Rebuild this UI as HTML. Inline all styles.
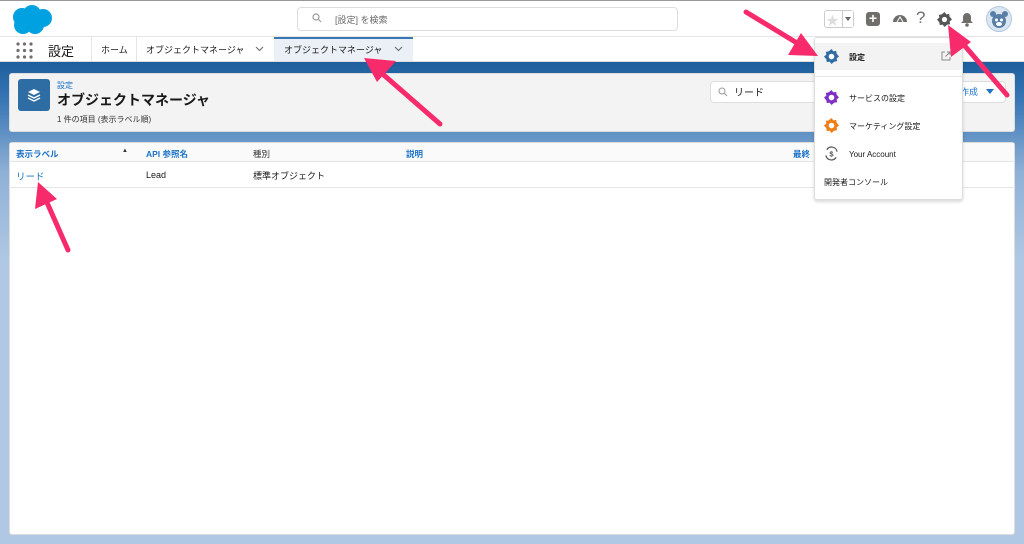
<!DOCTYPE html>
<html><head><meta charset="utf-8"><style>
*{box-sizing:border-box;margin:0;padding:0}
body{width:1024px;height:544px;overflow:hidden;font-family:"Liberation Sans","Noto Sans CJK JP",sans-serif;font-size:9px;color:#181818;background:#fff;position:relative}
.top{position:absolute;left:0;top:0;width:1024px;height:37px;background:#fff;border-top:1px solid #999;border-bottom:1px solid #e5e5e5}
.nav{position:absolute;left:0;top:37px;width:1024px;height:25px;background:#fff;border-bottom:1px solid #ddd}
.bg{position:absolute;left:0;top:62px;width:1024px;height:482px;background:linear-gradient(#1d5e9d 0px,#3a78b5 40px,#8fb0d6 110px,#b0c8e3 200px,#b0c8e3 482px)}
.card{position:absolute;background:#fff;border-radius:3px}
.abs{position:absolute;white-space:nowrap}
.blue{color:#1a73c8}
</style></head><body>
<div class="top">
 <svg class="abs" style="left:10px;top:3px" width="44" height="31" viewBox="0 0 44 31"><g fill="#00a1e0"><circle cx="12" cy="13" r="9"/><circle cx="22" cy="10" r="9"/><circle cx="33" cy="14" r="9"/><circle cx="25" cy="21" r="9"/><circle cx="13" cy="21" r="9"/></g></svg>
 <div class="abs" style="left:297px;top:6px;width:381px;height:24px;border:1px solid #ddd;border-radius:4px"></div>
 <svg class="abs" style="left:312px;top:12px" width="10" height="10" viewBox="0 0 10 10"><circle cx="4" cy="4" r="3" fill="none" stroke="#999" stroke-width="1.2"/><path d="M6.5 6.5L9 9" stroke="#999" stroke-width="1.2"/></svg>
 <div class="abs" style="left:335px;top:12px;color:#666;font-size:9px">[設定] を検索</div>
 <div class="abs" style="left:824px;top:9px;width:30px;height:18px;border:1px solid #ccc;border-radius:3px"></div>
 <div class="abs" style="left:826px;top:9px;color:#ddd;font-size:13px">★</div>
 <div class="abs" style="left:842px;top:10px;width:11px;height:16px;border-left:1px solid #ccc;background:#fff"></div>
 <div class="abs" style="left:845px;top:16px;border:3px solid transparent;border-top:4px solid #666"></div>
 <div class="abs" style="left:866px;top:11px;width:14px;height:14px;background:#706e6b;border-radius:3px;color:#fff;font-size:14px;line-height:13px;text-align:center;font-weight:bold">+</div>
 <svg class="abs" style="left:892px;top:11px" width="16" height="14" viewBox="0 0 16 14"><path d="M1 10a7 7 0 0 1 14 0z" fill="#706e6b"/><path d="M5 10l3-5 3 5M3 12h10" stroke="#fff" stroke-width="1" fill="none"/></svg>
 <div class="abs" style="left:916px;top:7px;color:#706e6b;font-size:17px">?</div>
 <svg class="abs" style="left:937px;top:11px" width="15" height="15" viewBox="0 0 16 16"><path d="M8 0l2 2.5 3-.5.5 3L16 8l-2.5 2 .5 3-3 .5L8 16l-2-2.5-3 .5-.5-3L0 8l2.5-2L2 3l3-.5z" fill="#555"/><circle cx="8" cy="8" r="2.8" fill="#fff"/></svg>
 <svg class="abs" style="left:960px;top:11px" width="14" height="15" viewBox="0 0 14 15"><path d="M7 1a4 4 0 0 1 4 4v4l2 2H1l2-2V5a4 4 0 0 1 4-4z" fill="#706e6b"/><circle cx="7" cy="13" r="1.8" fill="#706e6b"/></svg>
 <svg class="abs" style="left:986px;top:5px" width="26" height="26" viewBox="0 0 26 26"><circle cx="13" cy="13" r="12.5" fill="#dbe6f3" stroke="#b5c6dc"/><circle cx="13" cy="15" r="7" fill="#5a7fa6"/><circle cx="7" cy="8" r="3" fill="#5a7fa6"/><circle cx="19" cy="8" r="3" fill="#5a7fa6"/><circle cx="10.5" cy="14" r="1.5" fill="#fff"/><circle cx="15.5" cy="14" r="1.5" fill="#fff"/><ellipse cx="13" cy="18" rx="3" ry="2" fill="#fff"/></svg>
</div>
<div class="nav">
 <svg class="abs" style="left:16px;top:5px" width="17" height="17" viewBox="0 0 17 17"><g fill="#706e6b"><circle cx="2" cy="2" r="1.6"/><circle cx="8.5" cy="2" r="1.6"/><circle cx="15" cy="2" r="1.6"/><circle cx="2" cy="8.5" r="1.6"/><circle cx="8.5" cy="8.5" r="1.6"/><circle cx="15" cy="8.5" r="1.6"/><circle cx="2" cy="15" r="1.6"/><circle cx="8.5" cy="15" r="1.6"/><circle cx="15" cy="15" r="1.6"/></g></svg>
 <div class="abs" style="left:48px;top:4px;font-size:13px">設定</div>
 <div class="abs" style="left:91px;top:0;width:1px;height:24px;background:#e5e5e5"></div>
 <div class="abs" style="left:101px;top:6px;font-size:9px">ホーム</div>
 <div class="abs" style="left:136px;top:0;width:1px;height:24px;background:#e5e5e5"></div>
 <div class="abs" style="left:146px;top:6px;font-size:9px">オブジェクトマネージャ</div>
 <svg class="abs" style="left:255px;top:9px" width="9" height="6"><path d="M1 1l3.5 3.5L8 1" stroke="#666" fill="none"/></svg>
 <div class="abs" style="left:274px;top:0;width:139px;height:24px;background:#eaf0f6;border-top:2px solid #3a78b5"></div>
 <div class="abs" style="left:284px;top:6px;font-size:9px">オブジェクトマネージャ</div>
 <svg class="abs" style="left:394px;top:9px" width="9" height="6"><path d="M1 1l3.5 3.5L8 1" stroke="#666" fill="none"/></svg>
</div>
<div class="bg"></div>
<div class="card" style="left:9px;top:73px;width:1006px;height:59px;background:#f3f3f3;border:1px solid #ddd">
 <div class="abs" style="left:8px;top:5px;width:32px;height:32px;background:#2e6da4;border-radius:3px"></div>
 <svg class="abs" style="left:17px;top:14px" width="14" height="14" viewBox="0 0 14 14"><path d="M7 1l6 3-6 3-6-3z" fill="#fff"/><path d="M1 7l6 3 6-3M1 10l6 3 6-3" stroke="#fff" stroke-width="1.4" fill="none"/></svg>
 <div class="abs blue" style="left:47px;top:6px;font-size:8px">設定</div>
 <div class="abs" style="left:47px;top:16px;font-size:14px;font-weight:bold">オブジェクトマネージャ</div>
 <div class="abs" style="left:47px;top:40px;font-size:8px;color:#333">1 件の項目 (表示ラベル順)</div>
 <div class="abs" style="left:700px;top:7px;width:296px;height:22px;background:#fff;border:1px solid #ddd;border-radius:4px"></div>
 <svg class="abs" style="left:708px;top:13px" width="10" height="10"><circle cx="4" cy="4" r="3" fill="none" stroke="#999"/><path d="M6.3 6.3L9 9" stroke="#999"/></svg>
 <div class="abs" style="left:724px;top:10px;font-size:10px">リード</div>
 <div class="abs blue" style="left:950px;top:11px;font-size:9px">作成</div>
 <div class="abs" style="left:976px;top:15px;border:4px solid transparent;border-top:5px solid #1a73c8"></div>
</div>
<div class="card" style="left:9px;top:142px;width:1006px;height:393px;border:1px solid #ddd">
 <div class="abs" style="left:0;top:0;width:1004px;height:19px;background:#fafafa;border-bottom:1px solid #e5e5e5"></div>
 <div class="abs blue" style="left:6px;top:5px;font-weight:bold;font-size:8.5px">表示ラベル</div>
 <div class="abs" style="left:112px;top:5px;font-size:6px;color:#333">▲</div>
 <div class="abs blue" style="left:136px;top:5px;font-weight:bold;font-size:8.5px">API 参照名</div>
 <div class="abs" style="left:243px;top:5px;font-size:8.5px;color:#333">種別</div>
 <div class="abs blue" style="left:396px;top:5px;font-weight:bold;font-size:8.5px">説明</div>
 <div class="abs blue" style="left:783px;top:5px;font-weight:bold;font-size:8.5px">最終</div>
 <div class="abs" style="left:0;top:44px;width:1004px;height:1px;background:#e5e5e5"></div>
 <div class="abs blue" style="left:6px;top:26px;font-size:9.5px">リード</div>
 <div class="abs" style="left:136px;top:27px;font-size:9px">Lead</div>
 <div class="abs" style="left:243px;top:26px;font-size:9px">標準オブジェクト</div>
</div>
<div class="card" style="left:814px;top:37px;width:149px;height:163px;border:1px solid #ddd;box-shadow:0 2px 3px rgba(0,0,0,.15)">
 <div class="abs" style="left:0;top:5px;width:147px;height:27px;background:#f3f3f3"></div>
 <svg class="abs" style="left:9px;top:11px" width="15" height="15" viewBox="0 0 16 16"><path d="M8 0l2 2.5 3-.5.5 3L16 8l-2.5 2 .5 3-3 .5L8 16l-2-2.5-3 .5-.5-3L0 8l2.5-2L2 3l3-.5z" fill="#2e6da4"/><circle cx="8" cy="8" r="3" fill="#fff"/></svg>
 <div class="abs" style="left:34px;top:14px;font-size:8px;font-weight:bold">設定</div>
 <svg class="abs" style="left:126px;top:13px" width="10" height="10"><path d="M4 1H1v8h8V6M6 1h3v3M9 1L4.5 5.5" stroke="#888" fill="none"/></svg>
 <div class="abs" style="left:0;top:38px;width:147px;height:1px;background:#e5e5e5"></div>
 <svg class="abs" style="left:9px;top:52px" width="15" height="15" viewBox="0 0 16 16"><path d="M8 0l2 2.5 3-.5.5 3L16 8l-2.5 2 .5 3-3 .5L8 16l-2-2.5-3 .5-.5-3L0 8l2.5-2L2 3l3-.5z" fill="#7e2fc6"/><circle cx="8" cy="8" r="3" fill="#fff"/></svg>
 <div class="abs" style="left:34px;top:55px;font-size:8px">サービスの設定</div>
 <svg class="abs" style="left:9px;top:80px" width="15" height="15" viewBox="0 0 16 16"><path d="M8 0l2 2.5 3-.5.5 3L16 8l-2.5 2 .5 3-3 .5L8 16l-2-2.5-3 .5-.5-3L0 8l2.5-2L2 3l3-.5z" fill="#ef7e15"/><circle cx="8" cy="8" r="3" fill="#fff"/></svg>
 <div class="abs" style="left:34px;top:83px;font-size:8px">マーケティング設定</div>
 <svg class="abs" style="left:9px;top:108px" width="15" height="15" viewBox="0 0 16 16"><path d="M3 4a6 6 0 0 1 11 2M13 12a6 6 0 0 1-11-2" stroke="#555" stroke-width="1.3" fill="none"/><text x="8" y="11" font-size="8" text-anchor="middle" fill="#555" font-family="Liberation Sans" font-weight="bold">$</text></svg>
 <div class="abs" style="left:34px;top:112px;font-size:8px">Your Account</div>
 <div class="abs" style="left:9px;top:139px;font-size:8px">開発者コンソール</div>
</div>
<svg class="abs" style="left:0;top:0" width="1024" height="544">
 <g stroke="#f72a6c" stroke-width="5" stroke-linecap="round" fill="#f72a6c">
  <line x1="440" y1="124" x2="378" y2="70"/>
  <line x1="746" y1="12" x2="802" y2="46"/>
  <line x1="1007" y1="95" x2="958" y2="38"/>
  <line x1="68" y1="250" x2="45" y2="198"/>
 </g>
 <g fill="#f72a6c">
  <path d="M364 58l32 3-19 21z"/>
  <path d="M818 56l-30-1 13-22z"/>
  <path d="M948 25l3 32 20-15z"/>
  <path d="M38 182l-3 27 22-10z"/>
 </g>
</svg>
</body></html>
